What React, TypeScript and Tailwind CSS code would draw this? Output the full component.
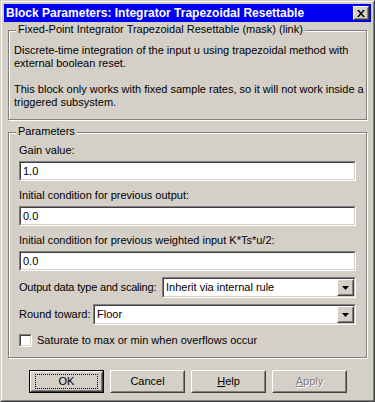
import React from "react";

const font = { fontFamily: '"Liberation Sans", Arial, sans-serif' };

function Sunken({ children, className = "" }: { children?: React.ReactNode; className?: string }) {
  return (
    <div className={`shrink-0 border border-t-[#808080] border-l-[#808080] border-r-white border-b-white ${className}`}>
      <div className="h-full border border-t-[#404040] border-l-[#404040] border-r-[#d4d0c8] border-b-[#d4d0c8] bg-white">
        {children}
      </div>
    </div>
  );
}

function Raised({ children, className = "" }: { children?: React.ReactNode; className?: string }) {
  return (
    <div className={`shrink-0 border border-t-white border-l-white border-r-[#404040] border-b-[#404040] bg-[#d4d0c8] ${className}`}>
      <div className="h-full border border-t-[#d4d0c8] border-l-[#d4d0c8] border-r-[#808080] border-b-[#808080] flex items-center justify-center">
        {children}
      </div>
    </div>
  );
}

function TextBox({ value }: { value: string }) {
  return (
    <Sunken className="h-[20px] w-[337px]">
      <div className="pl-[2px] leading-[16px] text-black">{value}</div>
    </Sunken>
  );
}

function Combo({ value, className }: { value: string; className: string }) {
  return (
    <Sunken className={`h-[21px] ${className}`}>
      <div className="flex h-full items-stretch">
        <div className="flex-1 pl-[2px] leading-[17px] text-black">{value}</div>
        <Raised className="w-[17px]">
          <svg width="7" height="4" viewBox="0 0 7 4">
            <path d="M0 0H7L3.5 4Z" fill="black" />
          </svg>
        </Raised>
      </div>
    </Sunken>
  );
}

function Group({ title, children, className = "" }: { title: string; children: React.ReactNode; className?: string }) {
  return (
    <div className={`relative border border-[#808080] shadow-[inset_1px_1px_0_white,1px_1px_0_white] ${className}`}>
      <span className="absolute left-[7px] top-[-8px] bg-[#d4d0c8] px-[2px] leading-[13px] text-black whitespace-nowrap">{title}</span>
      {children}
    </div>
  );
}

function Button({ children, def = false }: { children: React.ReactNode; def?: boolean }) {
  if (def) {
    return (
      <div className="h-[23px] w-[75px] border border-black">
        <Raised className="h-full w-full">
          <div className="h-[15px] w-[63px] border border-dotted border-black flex items-center justify-center leading-[13px]">
            {children}
          </div>
        </Raised>
      </div>
    );
  }
  return (
    <Raised className="h-[23px] w-[75px]">
      <span className="leading-[13px]">{children}</span>
    </Raised>
  );
}

export default function App() {
  return (
    <div style={font} className="w-[375px] h-[402px] text-[11px] text-black">
      <div className="h-full border border-t-[#d4d0c8] border-l-[#d4d0c8] border-r-[#404040] border-b-[#404040]">
        <div className="h-full border border-t-white border-l-white border-r-[#808080] border-b-[#808080] bg-[#d4d0c8] p-[2px] flex flex-col">
          <div className="h-[18px] bg-[#0000f0] flex items-center justify-between pl-[2px] pr-[2px]">
            <span className="text-white font-bold text-[12px] leading-[14px] whitespace-nowrap">
              Block Parameters: Integrator Trapezoidal Resettable
            </span>
            <Raised className="w-[16px] h-[14px]">
              <svg width="8" height="7" viewBox="0 0 8 7">
                <path d="M0 0h2l2 2.5L6 0h2L5 3.5 8 7H6L4 4.5 2 7H0l3-3.5z" fill="black" />
              </svg>
            </Raised>
          </div>
          <div className="flex flex-col pl-[4px] pr-[4px]">
            <Group title="Fixed-Point Integrator Trapezoidal Resettable (mask) (link)" className="mt-[8px] h-[90px] w-[359px]">
              <div className="pl-[5px] pt-[13px] leading-[13px] whitespace-nowrap">
                <div>Discrete-time integration of the input u using trapezoidal method with</div>
                <div>external boolean reset.</div>
                <div className="h-[13px]" />
                <div>This block only works with fixed sample rates, so it will not work inside a</div>
                <div>triggered subsystem.</div>
              </div>
            </Group>
            <Group title="Parameters" className="mt-[12px] h-[226px] w-[359px]">
              <div className="flex flex-col pl-[10px] pt-[11px] whitespace-nowrap">
                <div className="leading-[13px]">Gain value:</div>
                <div className="mt-[4px]"><TextBox value="1.0" /></div>
                <div className="mt-[8px] leading-[13px]">Initial condition for previous output:</div>
                <div className="mt-[4px]"><TextBox value="0.0" /></div>
                <div className="mt-[8px] leading-[13px]">Initial condition for previous weighted input K*Ts*u/2:</div>
                <div className="mt-[4px]"><TextBox value="0.0" /></div>
                <div className="mt-[6px] flex items-center w-[337px]">
                  <span className="flex-1 leading-[13px] tracking-[-0.2px]">Output data type and scaling:</span>
                  <Combo value="Inherit via internal rule" className="w-[194px]" />
                </div>
                <div className="mt-[6px] flex items-center w-[337px]">
                  <span className="flex-1 leading-[13px]">Round toward:</span>
                  <Combo value="Floor" className="w-[263px]" />
                </div>
                <div className="mt-[9px] flex items-center">
                  <Sunken className="w-[13px] h-[13px]" />
                  <span className="ml-[5px] leading-[13px]">Saturate to max or min when overflows occur</span>
                </div>
              </div>
            </Group>
            <div className="mt-[12px] flex pl-[21px] gap-[6px]">
              <Button def>OK</Button>
              <Button>Cancel</Button>
              <Button><span className="underline">H</span>elp</Button>
              <Button>
                <span className="text-[#808080] [text-shadow:1px_1px_0_white]"><span className="underline">A</span>pply</span>
              </Button>
            </div>
          </div>
        </div>
      </div>
    </div>
  );
}
